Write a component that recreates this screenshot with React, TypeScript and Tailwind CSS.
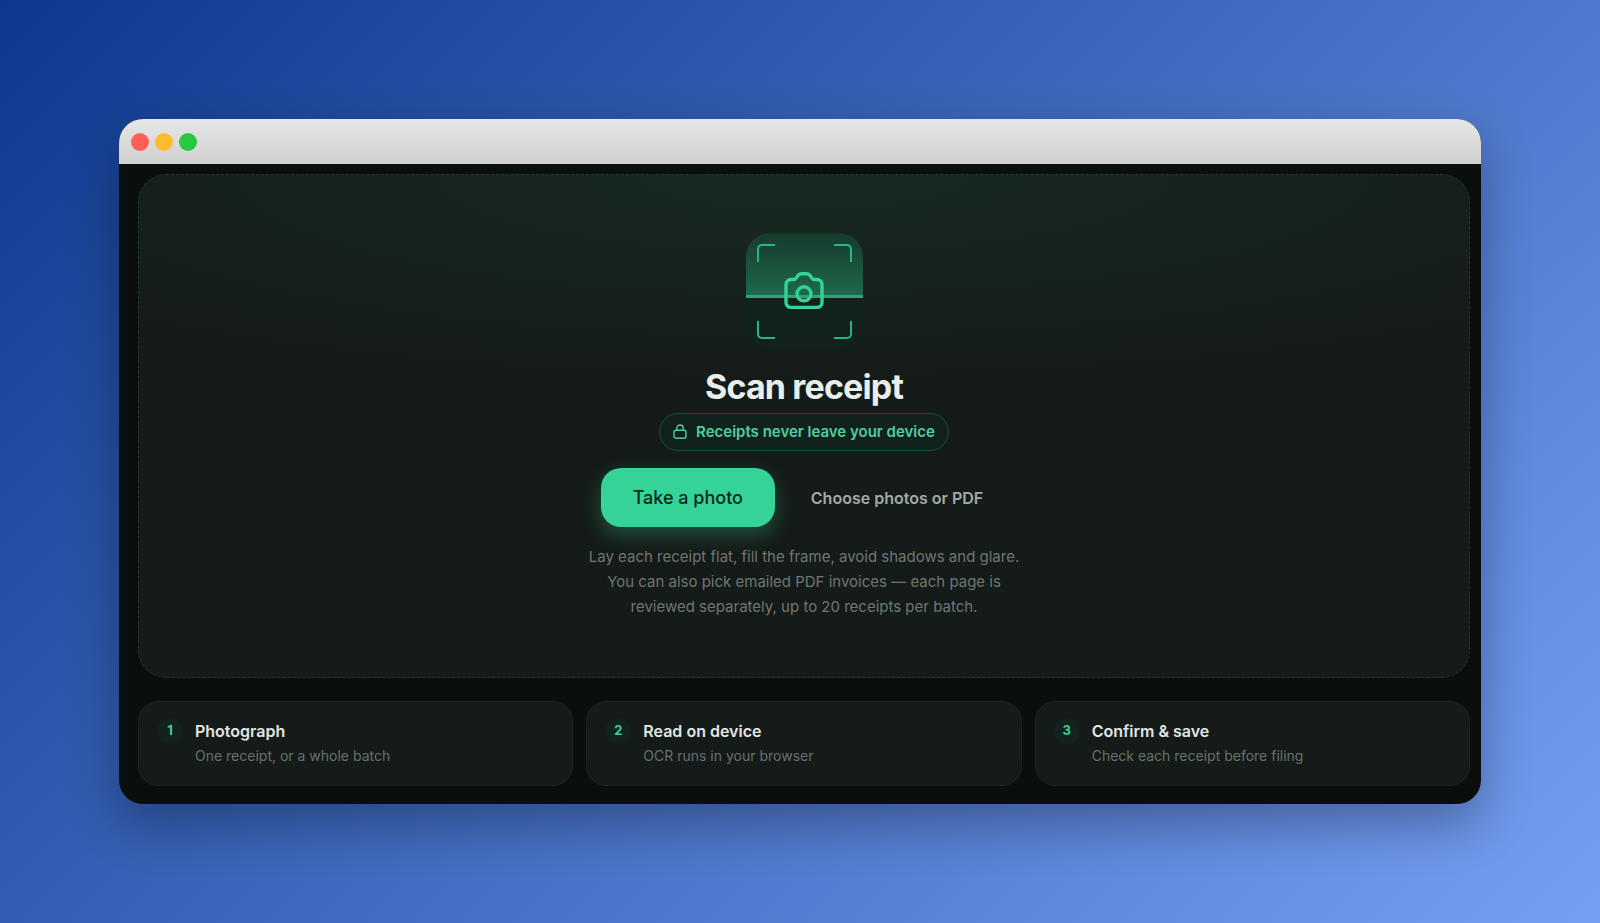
const steps = [
  { title: 'Photograph', text: 'One receipt, or a whole batch' },
  { title: 'Read on device', text: 'OCR runs in your browser' },
  { title: 'Confirm & save', text: 'Check each receipt before filing' },
];

const CameraIcon = () => (
  <svg width="40" height="40" viewBox="0 0 40 40" fill="none" stroke="currentColor" strokeWidth="3.4" strokeLinecap="round" strokeLinejoin="round" aria-hidden="true">
    <path d="M2 12.5a5 5 0 0 1 5-5h2.2a4 4 0 0 0 3.4-1.9l1.2-1.9a4 4 0 0 1 3.4-1.9h5.6a4 4 0 0 1 3.4 1.9l1.2 1.9a4 4 0 0 0 3.4 1.9H33a5 5 0 0 1 5 5v17.9a5 5 0 0 1-5 5H7a5 5 0 0 1-5-5z" />
    <circle cx="20" cy="21.8" r="7" />
  </svg>
);

const LockIcon = () => (
  <svg width="14" height="16" viewBox="0 0 14 16" fill="none" stroke="currentColor" strokeWidth="1.4" aria-hidden="true">
    <rect x="1" y="6.2" width="12" height="8" rx="2" />
    <path d="M3.8 6.2V4.2a3.2 3.2 0 0 1 6.4 0v2" />
  </svg>
);

const Scanner = () => (
  <div className="relative flex h-[117px] w-[117px] items-center justify-center overflow-hidden rounded-[24px] bg-[#11221c] text-[#34d399]">
    <div className="absolute inset-x-0 top-0 h-[65px] border-b-[3px] border-[#2aa579] bg-gradient-to-b from-[#163a2b] to-[#1d694c]" />
    <span className="absolute top-[11px] left-[11px] h-[18px] w-[18px] rounded-tl-[5px] border-t-2 border-l-2 border-[#2bb482]" />
    <span className="absolute top-[11px] right-[11px] h-[18px] w-[18px] rounded-tr-[5px] border-t-2 border-r-2 border-[#2bb482]" />
    <span className="absolute bottom-[11px] left-[11px] h-[18px] w-[18px] rounded-bl-[5px] border-b-2 border-l-2 border-[#2bb482]" />
    <span className="absolute right-[11px] bottom-[11px] h-[18px] w-[18px] rounded-br-[5px] border-r-2 border-b-2 border-[#2bb482]" />
    <div className="relative">
      <CameraIcon />
    </div>
  </div>
);

export default function App() {
  return (
    <div className="flex min-h-screen flex-col justify-center bg-[linear-gradient(135deg,#0d388c,#769ff2)] px-[119px] font-['Inter',sans-serif]">
      <div className="overflow-hidden rounded-[24px] bg-[#0a0f0d] shadow-[0_20px_50px_rgba(0,0,0,0.3)]">
        <div className="flex h-[45px] items-center gap-[6px] bg-gradient-to-b from-[#e6e6e6] to-[#d0d0d0] px-3">
          <span className="h-[18px] w-[18px] rounded-full bg-[#ff5f57]" />
          <span className="h-[18px] w-[18px] rounded-full bg-[#febc2e]" />
          <span className="h-[18px] w-[18px] rounded-full bg-[#28c840]" />
        </div>

        <main className="flex flex-col gap-[23px] pt-[10px] pr-[11px] pb-[18px] pl-[19px]">
          <section className="flex flex-col items-center rounded-[28px] border border-dashed border-[#2a332e] bg-[#151b18] bg-[radial-gradient(ellipse_75%_42%_at_50%_0%,#172a21,#151b18)] pt-[58px] pb-[58px]">
            <Scanner />
            <h1 className="mt-4 text-[34px] leading-[42px] font-bold tracking-tight text-[#e8efeb]">Scan receipt</h1>
            <p className="mt-[5px] flex h-[38px] items-center gap-[9px] rounded-full border border-[#16503b] bg-[#11221c] px-[13px] text-[15px] font-semibold text-[#52cda0]">
              <LockIcon />
              Receipts never leave your device
            </p>
            <div className="mt-[17px] flex items-center gap-3">
              <button className="h-[59px] w-[174px] rounded-[20px] bg-[#36d399] text-[18px] font-medium text-[#06291c] shadow-[0_8px_20px_rgba(52,211,153,0.3)]">
                Take a photo
              </button>
              <button className="h-[59px] px-6 text-[16px] font-semibold text-[#a3aaa6]">Choose photos or PDF</button>
            </div>
            <p className="mt-[17px] w-[440px] text-center text-[15px] leading-[25px] text-[#6f7773]">
              Lay each receipt flat, fill the frame, avoid shadows and glare. You can also pick emailed PDF invoices — each page is reviewed separately, up to 20 receipts per batch.
            </p>
          </section>

          <ol className="grid grid-cols-3 gap-[13px]">
            {steps.map((step, i) => (
              <li key={step.title} className="flex gap-3 rounded-[20px] border border-[#1f2622] bg-[#151b18] px-[18px] pt-4 pb-[17px]">
                <span className="flex h-[26px] w-[26px] items-center justify-center rounded-full bg-[#12221c] text-[13px] font-bold text-[#3fcf9a]">
                  {i + 1}
                </span>
                <div>
                  <h2 className="text-[16px] leading-[26px] font-semibold text-[#e1e7e4]">{step.title}</h2>
                  <p className="text-[14px] leading-[24px] text-[#68706c]">{step.text}</p>
                </div>
              </li>
            ))}
          </ol>
        </main>
      </div>
    </div>
  );
}
